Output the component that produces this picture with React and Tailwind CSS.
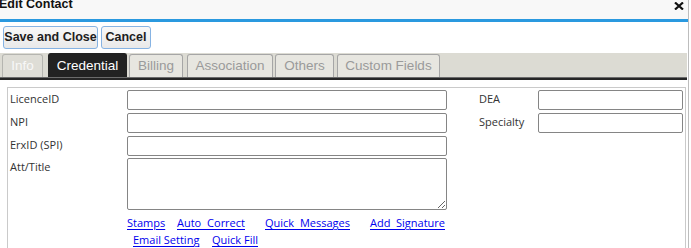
import React from 'react';

const tabs = [
  { id: 'info', label: 'Info', w: 'w-[41px]', ml: 'ml-[2px]' },
  { id: 'credential', label: 'Credential', w: 'w-[79px]', ml: 'ml-[5px]' },
  { id: 'billing', label: 'Billing', w: 'w-[54px]', ml: 'ml-[2px]' },
  { id: 'association', label: 'Association', w: 'w-[86px]', ml: 'ml-[4px]' },
  { id: 'others', label: 'Others', w: 'w-[59px]', ml: 'ml-[2px]' },
  { id: 'custom', label: 'Custom Fields', w: 'w-[103px]', ml: 'ml-[3px]' },
];

const Field = ({ w }) => (
  <input
    type="text"
    className={`${w} h-[20px] border border-[#858585] rounded-[2px] bg-white outline-none shrink-0`}
  />
);

const Label = ({ w, children, className = '' }) => (
  <span className={`${w} shrink-0 leading-[17px] text-[11px] text-[#333] ${className}`}>{children}</span>
);

const LinkBox = ({ w, ml, children }) => (
  <a
    href="#"
    className={`${w} ${ml} inline-block shrink-0 text-[#0000ee] underline underline-offset-[2px] text-justify [text-align-last:justify] whitespace-nowrap`}
  >
    {children}
  </a>
);

export default function App() {
  return (
    <div className="w-[691px] h-[248px] overflow-hidden bg-white font-['Liberation_Sans',sans-serif]">
      <div className="w-[689px] h-full border-r border-[#bdbdbd] flex flex-col">
        {/* Title bar */}
        <div className="h-[19px] bg-[#f8f8f8] flex justify-between items-start overflow-hidden">
          <span className="-mt-[3px] -ml-[1px] text-[12.5px] font-bold leading-[14px] text-[#111]">Edit Contact</span>
          <svg width="10" height="8" viewBox="0 0 10 8" className="mt-[2px] mr-[4px]">
            <path d="M1 0.5 L9 7.5 M9 0.5 L1 7.5" stroke="#111" strokeWidth="2.2" />
          </svg>
        </div>
        <div className="h-[3px] bg-[#2a99df]" />

        {/* Buttons */}
        <div className="flex gap-[3px] pl-[3px] mt-[4px]">
          <button className="h-[23px] w-[95px] rounded-[3px] border border-[#86b3e3] bg-gradient-to-b from-[#f8f8f8] to-[#e9e9e9] text-[12.5px] font-bold text-[#1d1d1d]">
            Save and Close
          </button>
          <button className="h-[23px] w-[50px] rounded-[3px] border border-[#86b3e3] bg-gradient-to-b from-[#f8f8f8] to-[#e9e9e9] text-[12.5px] font-bold text-[#1d1d1d]">
            Cancel
          </button>
        </div>

        {/* Tabs */}
        <div className="mt-[4px] h-[24px] bg-[#dcdbd3] flex items-end w-[687px]">
          {tabs.map((t) => {
            const active = t.id === 'credential';
            const first = t.id === 'info';
            return (
              <div
                key={t.id}
                className={`${t.w} ${t.ml} shrink-0 flex items-center justify-center pt-[1px] rounded-t-[3px] border border-b-0 text-[13.5px] ${
                  active
                    ? 'h-[24px] bg-[#222] border-[#222] text-white'
                    : first
                    ? 'h-[23px] bg-[#deddd6] border-[#b5b5b0] text-[#f8f8f8]'
                    : 'h-[23px] bg-[#e7e6e0] border-[#a6a6a6] text-[#9a9a9a]'
                }`}
              >
                {t.label}
              </div>
            );
          })}
        </div>
        <div className="w-[687px] h-[3px] bg-[#262626] border-t border-[#6b6b6b]" />

        {/* Panel */}
        <div className="mt-[7px] ml-[7px] w-[679px] flex-1 border-t border-l border-r border-[#cacaca] pt-[2px] pl-[2px] font-['Open_Sans',sans-serif]">
          <div className="flex flex-col gap-[3px]">
            <div className="flex items-start">
              <Label w="w-[117px]">LicenceID</Label>
              <Field w="w-[320px]" />
              <Label w="w-[59px]" className="ml-[32px]">DEA</Label>
              <Field w="w-[145px]" />
            </div>
            <div className="flex items-start">
              <Label w="w-[117px]">NPI</Label>
              <Field w="w-[320px]" />
              <Label w="w-[59px]" className="ml-[32px]">Specialty</Label>
              <Field w="w-[145px]" />
            </div>
            <div className="flex items-start">
              <Label w="w-[117px]">ErxID (SPI)</Label>
              <Field w="w-[320px]" />
            </div>
            <div className="flex items-start -mt-[1px]">
              <Label w="w-[117px]">Att/Title</Label>
              <textarea className="w-[320px] h-[52px] border border-[#858585] rounded-[2px] bg-white outline-none shrink-0" />
            </div>
          </div>

          <div className="ml-[117px] mt-[4px] text-[11px] leading-[17px]">
            <div className="flex">
              <LinkBox w="w-[36px]" ml="ml-0">Stamps</LinkBox>
              <LinkBox w="w-[68px]" ml="ml-[14px]">Auto Correct</LinkBox>
              <LinkBox w="w-[85px]" ml="ml-[20px]">Quick Messages</LinkBox>
              <LinkBox w="w-[75px]" ml="ml-[20px]">Add Signature</LinkBox>
            </div>
            <div className="flex">
              <LinkBox w="w-[64px]" ml="ml-[6px]">Email Setting</LinkBox>
              <LinkBox w="w-[44px]" ml="ml-[15px]">Quick Fill</LinkBox>
            </div>
          </div>
        </div>
      </div>
    </div>
  );
}
